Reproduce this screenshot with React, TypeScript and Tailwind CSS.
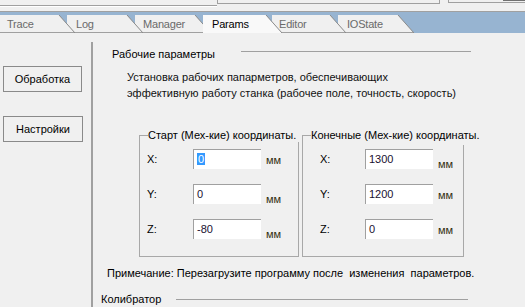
import React from "react";

const tabs = [
  { label: "Trace", w: 75, cls: "w-[75px] ml-0 z-[6]", pl: "pl-[7px]" },
  { label: "Log", w: 76, cls: "w-[76px] -ml-[8px] z-[5]", pl: "pl-[9px]" },
  { label: "Manager", w: 76, cls: "w-[76px] -ml-[8px] z-[4]", pl: "pl-[8px]" },
  { label: "Params", w: 79, cls: "w-[79px] -ml-[8px] z-[10]", pl: "pl-[9px]", active: true },
  { label: "Editor", w: 74, cls: "w-[74px] -ml-[10px] z-[3]", pl: "pl-[7px]" },
  { label: "IOState", w: 76, cls: "w-[76px] -ml-[8px] z-[2]", pl: "pl-[9px]" },
];

function Tab({ tab }: { tab: (typeof tabs)[number] }) {
  return (
    <div className={`relative h-[18px] shrink-0 ${tab.cls}`}>
      <div
        className={`h-full [clip-path:polygon(0_0,calc(100%-16px)_0,100%_100%,0_100%)] ${
          tab.active ? "bg-[#f9f9f9] text-black" : "bg-[#f0f0f0] text-[#6a6a6a] border-b border-[#a0a0a0]"
        } ${tab.pl} pt-[3px] text-[11px] leading-[13px] tracking-[-0.2px]`}
      >
        {tab.label}
      </div>
      <svg className="absolute left-0 top-0 pointer-events-none" width={tab.w} height={18}>
        <line x1={tab.w - 16} y1={0} x2={tab.w} y2={18} stroke="#8a8a8a" strokeWidth={1} />
      </svg>
    </div>
  );
}

function Field({
  label,
  value,
  selected,
  lx,
  mmDrop,
}: {
  label: string;
  value: string;
  selected?: boolean;
  lx: string;
  mmDrop: string;
}) {
  return (
    <div className="flex items-start h-[20px]">
      <span className={`${lx} leading-[20px] shrink-0`}>{label}</span>
      <div className="w-[68px] h-[20px] shrink-0 bg-white border-t border-l border-[#a0a0a0] pl-[3px] pt-[2px] leading-[14px] text-[#1a1030]">
        {selected ? <span className="bg-[#3399ff] text-white px-[1px]">{value}</span> : value}
      </div>
      <span className={`ml-[5px] ${mmDrop} leading-[20px] text-[11px] text-[#333010]`}>мм</span>
    </div>
  );
}

export default function App() {
  return (
    <div
      className="w-[525px] h-[307px] overflow-hidden bg-[#f0f0f0] text-[11px] text-black"
      style={{ fontFamily: '"Liberation Sans", Arial, sans-serif' }}
    >
      {/* top strip */}
      <div className="relative h-[12px] border-b border-[#a0a0a0]">
        <div className="absolute left-0 top-[5px] w-[217px] border-t border-b border-t-[#a0a0a0] border-b-white" />
        <div className="absolute left-[217px] -top-[10px] w-[223px] h-[14px] border border-[#a0a0a0]" />
        <div className="absolute left-[448px] -top-[10px] w-[80px] h-[13px] border border-[#a0a0a0]">
          <div className="absolute right-0 top-[8px] w-[24px] h-[2px] bg-[#707070]" />
        </div>
      </div>

      {/* tab strip */}
      <div className="h-[21px] bg-[#97b4d1] pt-[2px] flex items-end">
        {tabs.map((t) => (
          <Tab key={t.label} tab={t} />
        ))}
      </div>

      {/* body */}
      <div className="flex h-[274px]">
        <div className="w-[91px] shrink-0 pl-[3px] pt-[33px] flex flex-col gap-[24px]">
          <button className="w-[79px] h-[26px] border border-[#8a8a8a] bg-[#f0f0f0] text-[11px]">Обработка</button>
          <button className="w-[80px] h-[26px] border border-[#8a8a8a] bg-[#f0f0f0] text-[11px]">Настройки</button>
        </div>

        <div className="w-[2px] shrink-0 mt-[9px] bg-[#a0a0a0]" />

        <div className="flex-1 flex flex-col">
          {/* title */}
          <div className="flex items-start mt-[14px] h-[14px]">
            <span className="ml-[19px] leading-[14px] whitespace-nowrap">Рабочие параметры</span>
            <div className="ml-[26px] mt-[4px] w-[230px] h-[1px] bg-[#a0a0a0]" />
          </div>

          <p className="ml-[34px] mt-[8px] leading-[16px] text-[#111]">
            Установка рабочих папарметров, обеспечивающих
            <br />
            эффективную работу станка (рабочее поле, точность, скорость)
          </p>

          {/* group boxes */}
          <div className="flex gap-[3px] ml-[46px] mt-[34px]">
            <div className="relative w-[160px] h-[122px] shrink-0 border border-[#a8a8a8]">
              <span className="absolute -top-[8px] left-[8px] pr-[3px] bg-[#f0f0f0] leading-[14px] whitespace-nowrap">
                Старт (Мех-кие) координаты.
              </span>
              <div className="flex flex-col gap-[15px] pt-[13px]">
                <Field label="X:" value="0" selected lx="ml-[7px] w-[46px]" mmDrop="mt-[1px]" />
                <Field label="Y:" value="0" lx="ml-[7px] w-[46px]" mmDrop="mt-[5px]" />
                <Field label="Z:" value="-80" lx="ml-[7px] w-[46px]" mmDrop="mt-[5px]" />
              </div>
            </div>
            <div className="relative w-[162px] h-[122px] shrink-0 border border-[#a8a8a8]">
              <span className="absolute -top-[8px] left-[8px] pr-[3px] bg-[#f0f0f0] leading-[14px] h-[17px] whitespace-nowrap">
                Конечные (Мех-кие) координаты.
              </span>
              <div className="flex flex-col gap-[15px] pt-[13px]">
                <Field label="X:" value="1300" lx="ml-[17px] w-[45px]" mmDrop="mt-[5px]" />
                <Field label="Y:" value="1200" lx="ml-[17px] w-[45px]" mmDrop="mt-[1px]" />
                <Field label="Z:" value="0" lx="ml-[17px] w-[45px]" mmDrop="mt-[1px]" />
              </div>
            </div>
          </div>

          <p className="ml-[14px] mt-[9px] leading-[14px] whitespace-pre">
            Примечание: Перезагрузите программу после  изменения  параметров.
          </p>

          <div className="flex items-center mt-[12px] h-[14px]">
            <span className="ml-[8px] leading-[14px]">Колибратор</span>
            <div className="ml-[15px] w-[292px] h-[1px] bg-[#a0a0a0]" />
          </div>
        </div>
      </div>
    </div>
  );
}
